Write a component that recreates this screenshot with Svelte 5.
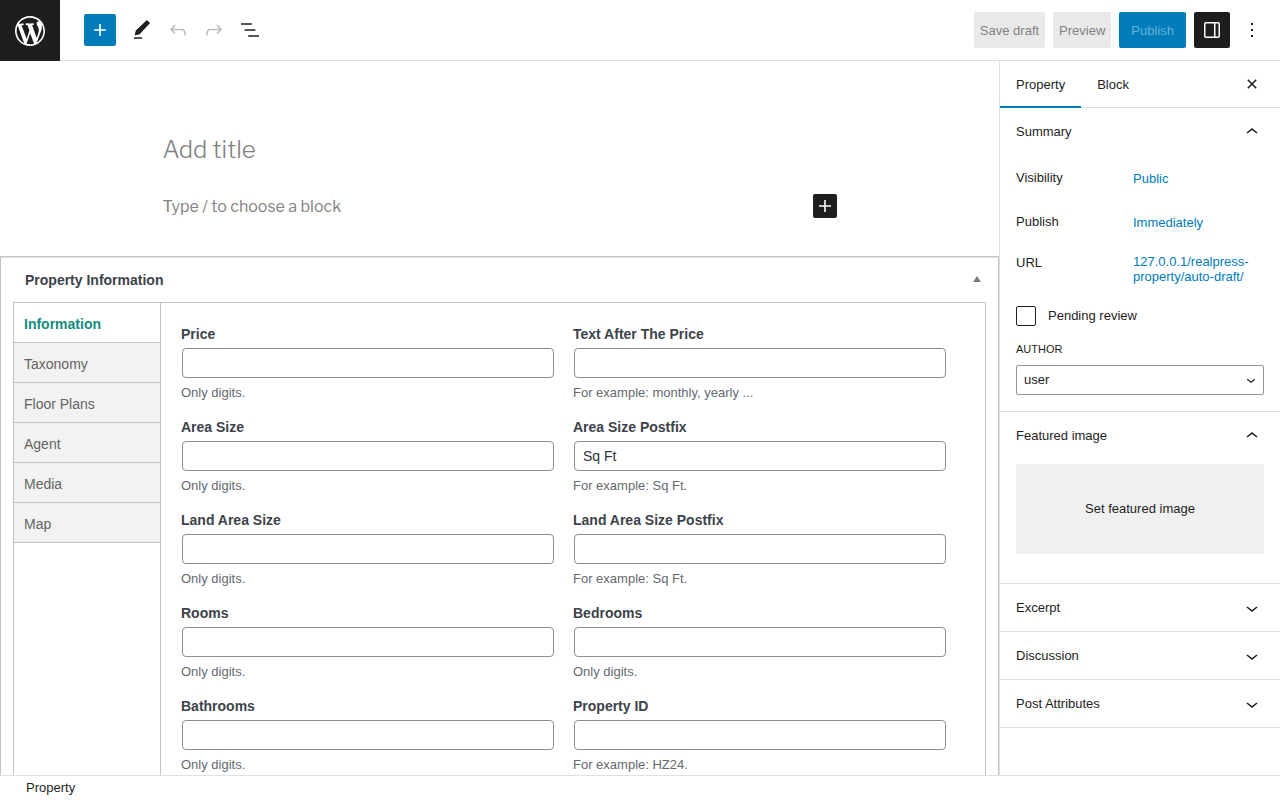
<script>
  const icons = {
    plus: 'M18 11.2h-5.2V6h-1.6v5.2H6v1.6h5.2V18h1.6v-5.2H18z',
    edit: 'M20.1 5.1L16.9 2 5.8 12.6l-1.1 4.8 4.9-1.2L20.1 5.1zM4 20.8h8v-1.5H4v1.5z',
    undo: 'M18.3 11.7c-.6-.6-1.4-.9-2.3-.9H6.7l2.9-3.3-1.1-1-4.5 5L8.5 16l1-1-2.7-2.7H16c.5 0 .9.2 1.3.5 1 1 1 3.4 1 4.5v.3h1.5v-.2c0-1.5 0-4.3-1.5-5.7z',
    redo: 'M15.6 6.5l-1.1 1 2.9 3.3H8c-.9 0-1.7.3-2.3.9-1.4 1.5-1.4 4.2-1.4 5.6v.2h1.5v-.3c0-1.1 0-3.5 1-4.5.3-.3.7-.5 1.3-.5h9.2L14.5 15l1.1 1.1 4.6-4.6-4.6-5z',
    list: 'M13.8 5.2H3v1.5h10.8V5.2zm-3.6 12v1.5H21v-1.5H10.2zm7.2-6H6.6v1.5h10.8v-1.5z',
    drawer: 'M18 4H6c-1.1 0-2 .9-2 2v12c0 1.1.9 2 2 2h12c1.1 0 2-.9 2-2V6c0-1.1-.9-2-2-2zm-4 14.5H6c-.3 0-.5-.2-.5-.5V6c0-.3.2-.5.5-.5h8v13zm4.5-.5c0 .3-.2.5-.5.5h-2.5v-13H18c.3 0 .5.2.5.5v12z',
    more: 'M13 19h-2v-2h2v2zm0-6h-2v-2h2v2zm0-6h-2V5h2v2z',
    close: 'M12 13.06l3.712 3.713 1.061-1.06L13.061 12l3.712-3.712-1.06-1.06L12 10.938 8.288 7.227l-1.061 1.06L10.939 12l-3.712 3.712 1.06 1.061L12 13.061z',
    up: 'M6.5 12.4L12 8l5.5 4.4-.9 1.2L12 10l-4.5 3.6-1-1.2z',
    down: 'M17.5 11.6L12 16l-5.5-4.4.9-1.2L12 14l4.5-3.6 1 1.2z',
    wordpress:
      'M20 10c0-5.51-4.49-10-10-10C4.48 0 0 4.49 0 10c0 5.52 4.48 10 10 10 5.51 0 10-4.48 10-10zM7.78 15.37L4.37 6.22c.55-.02 1.17-.08 1.17-.08.5-.06.44-1.13-.06-1.11 0 0-1.45.11-2.37.11-.18 0-.37 0-.58-.01C4.12 2.69 6.87 1.11 10 1.11c2.33 0 4.45.87 6.05 2.34-.68-.11-1.65.39-1.65 1.58 0 .74.45 1.36.9 2.1.35.61.55 1.36.55 2.46 0 1.49-1.4 5-1.4 5l-3.03-8.37c.54-.02.82-.17.82-.17.5-.05.44-1.25-.06-1.22 0 0-1.44.12-2.38.12-.87 0-2.33-.12-2.33-.12-.5-.03-.56 1.2-.06 1.22l.92.08 1.26 3.41zM17.41 10c.24-.64.74-1.87.43-4.25.7 1.29 1.05 2.71 1.05 4.25 0 3.29-1.73 6.24-4.4 7.78.97-2.59 1.94-5.2 2.92-7.78zM6.1 18.09C3.12 16.65 1.11 13.53 1.11 10c0-1.3.23-2.48.72-3.59C3.25 10.3 4.67 14.2 6.1 18.09zm4.03-6.63l2.58 6.98c-.86.29-1.76.45-2.71.45-.79 0-1.57-.11-2.29-.33.81-2.38 1.62-4.74 2.42-7.1z'
  };

  const tabs = ['Information', 'Taxonomy', 'Floor Plans', 'Agent', 'Media', 'Map'];
  let activeTab = $state('Information');

  const fields = $state([
    { id: 'price', label: 'Price', value: '', help: 'Only digits.' },
    { id: 'price-text', label: 'Text After The Price', value: '', help: 'For example: monthly, yearly ...' },
    { id: 'area', label: 'Area Size', value: '', help: 'Only digits.' },
    { id: 'area-postfix', label: 'Area Size Postfix', value: 'Sq Ft', help: 'For example: Sq Ft.' },
    { id: 'land', label: 'Land Area Size', value: '', help: 'Only digits.' },
    { id: 'land-postfix', label: 'Land Area Size Postfix', value: '', help: 'For example: Sq Ft.' },
    { id: 'rooms', label: 'Rooms', value: '', help: 'Only digits.' },
    { id: 'bedrooms', label: 'Bedrooms', value: '', help: 'Only digits.' },
    { id: 'bathrooms', label: 'Bathrooms', value: '', help: 'Only digits.' },
    { id: 'property-id', label: 'Property ID', value: '', help: 'For example: HZ24.' }
  ]);

  const closedPanels = ['Excerpt', 'Discussion', 'Post Attributes'];
</script>

{#snippet icon(name, size = 24)}
  <svg width={size} height={size} viewBox={name === 'wordpress' ? '-2 -2 24 24' : '0 0 24 24'} fill="currentColor" fill-rule={name === 'drawer' ? 'evenodd' : 'nonzero'} aria-hidden="true">
    <path d={icons[name]} />
  </svg>
{/snippet}

<div class="editor">
  <header class="topbar">
    <a class="logo" href="#posts" aria-label="View posts">{@render icon('wordpress', 36)}</a>
    <div class="tools">
      <button class="tool inserter" aria-label="Toggle block inserter">{@render icon('plus')}</button>
      <button class="tool" aria-label="Tools">{@render icon('edit')}</button>
      <button class="tool" aria-label="Undo" disabled>{@render icon('undo')}</button>
      <button class="tool" aria-label="Redo" disabled>{@render icon('redo')}</button>
      <button class="tool" aria-label="List view">{@render icon('list')}</button>
    </div>
    <div class="actions">
      <button class="action" disabled>Save draft</button>
      <button class="action" disabled>Preview</button>
      <button class="action primary" disabled>Publish</button>
      <button class="action toggle" aria-label="Settings">{@render icon('drawer')}</button>
      <button class="more" aria-label="Options">{@render icon('more')}</button>
    </div>
  </header>

  <div class="body">
    <main class="canvas">
      <div class="writing">
        <input class="title" aria-label="Add title" placeholder="Add title" />
        <div class="block">
          <input class="paragraph" aria-label="Empty block" placeholder="Type / to choose a block" />
          <button class="add-block" aria-label="Add block">{@render icon('plus')}</button>
        </div>
      </div>

      <section class="metabox">
        <div class="metabox-head">
          <h2>Property Information</h2>
          <button class="collapse" aria-label="Toggle panel: Property Information">
            <svg width="8" height="6" viewBox="0 0 8 6" fill="currentColor" aria-hidden="true"><path d="M4 0L8 6H0z" /></svg>
          </button>
        </div>
        <div class="metabox-inner">
          <nav class="side-tabs">
            {#each tabs as tab}
              <button class:active={tab === activeTab} onclick={() => (activeTab = tab)}>{tab}</button>
            {/each}
          </nav>
          <div class="fields">
            {#each fields as field (field.id)}
              <div class="field">
                <label for={field.id}>{field.label}</label>
                <input id={field.id} type="text" bind:value={field.value} />
                <p>{field.help}</p>
              </div>
            {/each}
          </div>
        </div>
      </section>
    </main>

    <aside class="sidebar">
      <div class="sidebar-tabs">
        <button class="current">Property</button>
        <button>Block</button>
        <button class="close" aria-label="Close settings">{@render icon('close')}</button>
      </div>

      <section class="panel summary">
        <button class="panel-head">Summary {@render icon('up')}</button>
        <div class="row"><span>Visibility</span><a href="#visibility">Public</a></div>
        <div class="row"><span>Publish</span><a href="#schedule">Immediately</a></div>
        <div class="row url"><span>URL</span><a href="#url">127.0.0.1/realpress-property/auto-draft/</a></div>
        <label class="check"><input type="checkbox" />Pending review</label>
        <label class="author-label" for="author">Author</label>
        <div class="select">
          <select id="author"><option>user</option></select>
          <span class="select-arrow">{@render icon('down', 18)}</span>
        </div>
      </section>

      <section class="panel featured">
        <button class="panel-head">Featured image {@render icon('up')}</button>
        <button class="set-image">Set featured image</button>
      </section>

      {#each closedPanels as name}
        <section class="panel"><button class="panel-head closed">{name} {@render icon('down')}</button></section>
      {/each}
    </aside>
  </div>

  <footer>Property</footer>
</div>

<style>
  :global(body) {
    margin: 0;
  }
  .editor,
  .editor * {
    box-sizing: border-box;
  }
  .editor {
    display: flex;
    flex-direction: column;
    height: 100vh;
    overflow: hidden;
    background: #fff;
    color: #1e1e1e;
    font: 13px/20px 'Liberation Sans', Arial, sans-serif;
  }
  svg {
    display: block;
    flex: none;
  }
  button,
  input,
  select {
    margin: 0;
    padding: 0;
    border: 0;
    border-radius: 0;
    background: none;
    color: inherit;
    font: inherit;
  }
  a {
    color: #007cba;
    text-decoration: none;
  }

  .topbar {
    display: flex;
    flex: none;
    align-items: center;
    height: 61px;
    border-bottom: 1px solid #e0e0e0;
  }
  .logo {
    display: grid;
    place-items: center;
    width: 60px;
    height: 61px;
    margin-bottom: -1px;
    background: #1e1e1e;
    color: #fff;
  }
  .tools {
    display: flex;
    align-items: center;
    margin-left: 24px;
    gap: 4px;
  }
  .tool {
    display: grid;
    place-items: center;
    width: 32px;
    height: 32px;
  }
  .tool:disabled {
    color: #bbb;
  }
  .inserter {
    margin-right: 6px;
    border-radius: 2px;
    background: #007cba;
    color: #fff;
  }
  .actions {
    display: flex;
    align-items: center;
    gap: 8px;
    margin-left: auto;
    padding-right: 14px;
  }
  .action {
    height: 36px;
    padding: 2px 6px 0;
    border-radius: 2px;
    background: #e9e9e9;
    color: #828282;
  }
  .primary {
    padding: 2px 12px 0;
    background: #007cba;
    color: #66b0d6;
  }
  .toggle {
    display: grid;
    place-items: center;
    width: 36px;
    padding: 0;
    background: #1e1e1e;
    color: #fff;
  }
  .more {
    display: grid;
    place-items: center;
    width: 28px;
    height: 36px;
  }

  .body {
    display: flex;
    flex: 1;
    min-height: 0;
  }
  .canvas {
    flex: 1;
    min-width: 0;
    overflow: hidden;
  }
  .writing {
    display: flex;
    flex-direction: column;
    gap: 28px;
    max-width: 674px;
    height: 195px;
    margin: 0 auto;
    padding-top: 72px;
  }
  .writing input {
    width: 100%;
    outline: 0;
    font-family: 'Libre Franklin', Roboto, sans-serif;
  }
  .writing input::placeholder {
    color: #828282;
    opacity: 1;
  }
  .writing .title {
    height: 33px;
    font-size: 24px;
    font-weight: 300;
  }
  .block {
    display: flex;
    align-items: center;
    height: 24px;
  }
  .writing .paragraph {
    height: 24px;
    font-size: 16px;
  }
  .add-block {
    flex: none;
    border-radius: 2px;
    background: #1e1e1e;
    color: #fff;
  }

  .metabox {
    padding: 0 12px;
    border: 1px solid #c3c4c7;
    box-shadow: inset 0 1px #e0e0e0;
    color: #3c434a;
  }
  .metabox-head {
    display: flex;
    align-items: center;
    justify-content: space-between;
    height: 45px;
    padding: 0 5px 0 12px;
  }
  h2 {
    margin: 0;
    font-size: 14px;
    line-height: 20px;
  }
  .collapse {
    padding-bottom: 2px;
    color: #787c82;
  }
  .metabox-inner {
    display: flex;
    border: 1px solid #c3c4c7;
  }
  .side-tabs {
    flex: none;
    width: 147px;
    border-right: 1px solid #c3c4c7;
  }
  .side-tabs button {
    display: block;
    width: 100%;
    height: 40px;
    padding: 3px 10px 0;
    border-bottom: 1px solid #c3c4c7;
    background: #f2f2f2;
    color: #646464;
    font-size: 14px;
    text-align: left;
  }
  .side-tabs .active {
    background: #fff;
    color: #128c7e;
    font-weight: 700;
  }
  .fields {
    display: grid;
    flex: 1;
    grid-template-columns: 1fr 1fr;
    gap: 14px 18px;
    padding: 21px 38px 20px 20px;
  }
  .field label {
    display: block;
    font-size: 14px;
    font-weight: 700;
  }
  .field input {
    display: block;
    width: calc(100% - 2px);
    height: 30px;
    margin: 4px 1px 5px;
    padding: 0 8px;
    border: 1px solid #8c8f94;
    border-radius: 4px;
    background: #fff;
    color: #2c3338;
    font-size: 14px;
  }
  .field p {
    margin: 0;
    color: #646970;
  }

  .sidebar {
    flex: none;
    width: 281px;
    border-left: 1px solid #e0e0e0;
  }
  .sidebar-tabs {
    display: flex;
    height: 47px;
    border-bottom: 1px solid #e0e0e0;
  }
  .sidebar-tabs button {
    height: 47px;
    padding: 0 16px;
  }
  .sidebar-tabs .current {
    box-shadow: inset 0 -2px #007cba;
  }
  .sidebar-tabs .close {
    height: 46px;
    margin-left: auto;
  }
  .panel {
    padding: 0 16px;
    border-bottom: 1px solid #e0e0e0;
  }
  .panel-head {
    display: flex;
    align-items: center;
    justify-content: space-between;
    width: 100%;
    height: 48px;
    text-align: left;
  }
  .closed {
    height: 47px;
  }
  .summary {
    padding-bottom: 16px;
  }
  .row {
    display: grid;
    grid-template-columns: 117px 1fr;
    align-items: center;
    height: 36px;
    margin-bottom: 8px;
  }
  .summary .panel-head {
    margin-bottom: 5px;
  }
  .row span {
    padding-bottom: 2px;
  }
  .url {
    align-items: start;
    margin: 13px 0 16px;
    line-height: 15px;
  }
  .url span {
    padding-top: 1px;
  }
  .check {
    display: flex;
    align-items: center;
    gap: 12px;
    height: 20px;
    margin-bottom: 13px;
  }
  .check input {
    width: 20px;
    height: 20px;
    border: 1px solid #1e1e1e;
    border-radius: 2px;
    appearance: none;
  }
  .author-label {
    display: block;
    margin-bottom: 6px;
    font-size: 11px;
    text-transform: uppercase;
  }
  .select {
    position: relative;
  }
  select {
    display: block;
    width: 100%;
    height: 30px;
    padding: 0 7px;
    border: 1px solid #949494;
    border-radius: 2px;
    appearance: none;
  }
  .select-arrow {
    position: absolute;
    top: 6px;
    right: 4px;
    pointer-events: none;
  }
  .featured {
    padding-bottom: 29px;
  }
  .set-image {
    width: 100%;
    height: 90px;
    margin-top: 4px;
    background: #f0f0f0;
  }

  footer {
    flex: none;
    height: 25px;
    padding: 2px 26px;
    border-top: 1px solid #e0e0e0;
  }
</style>
